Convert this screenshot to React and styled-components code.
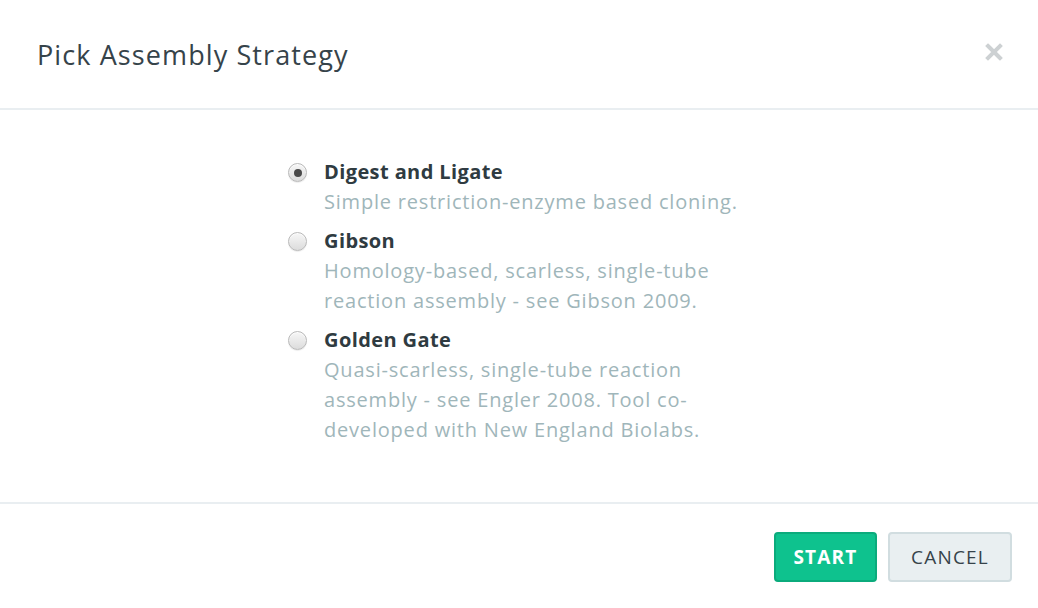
import React, { useState } from "react";
import styled, { createGlobalStyle } from "styled-components";

const GlobalStyle = createGlobalStyle`
    html, body {
        margin: 0;
        padding: 0;
        background: #ffffff;
    }
    body {
        font-family: 'Open Sans', sans-serif;
        -webkit-font-smoothing: antialiased;
    }
`

const Modal = styled.div`
    width: 1038px;
    height: 608px;
    display: flex;
    flex-direction: column;
    background: #ffffff;
`

const Header = styled.header`
    height: 108px;
    padding: 0 35px 0 37px;
    display: flex;
    align-items: center;
    justify-content: space-between;
    border-bottom: 2px solid #e9eef1;
`

const Title = styled.h2`
    margin: 0;
    font-family: 'Open Sans', sans-serif;
    font-weight: 400;
    font-size: 27px;
    color: #36434a;
    letter-spacing: 1.1px;
`

const Close = styled.button`
    border: none;
    background: none;
    padding: 0;
    width: 18px;
    height: 18px;
    cursor: pointer;
    margin-bottom: 4px;
`

const Body = styled.main`
    flex: 1;
    padding-top: 47px;
    border-bottom: 2px solid #e9eef1;
`

const Options = styled.div`
    width: 462px;
    margin: 0 auto;
    display: flex;
    flex-direction: column;
    gap: 9px;
`

const Option = styled.label`
    display: grid;
    grid-template-columns: 36px 1fr;
    cursor: pointer;
`

const Radio = styled.span`
    width: 19px;
    height: 19px;
    margin-top: 6px;
    border-radius: 50%;
    box-sizing: border-box;
    border: 1px solid #b9b9b9;
    background: linear-gradient(#f7f7f7, #dcdcdc);
    box-shadow: inset 0 1px 0 rgba(255,255,255,0.8), 0 1px 1px rgba(0,0,0,0.08);
    display: flex;
    align-items: center;
    justify-content: center;

    &::after {
        content: '';
        width: 8px;
        height: 8px;
        border-radius: 50%;
        background: #4a4a4a;
        display: ${p => (p.$checked ? 'block' : 'none')};
    }
`

const OptionName = styled.div`
    font-family: 'Open Sans', sans-serif;
    font-weight: 700;
    font-size: 20px;
    line-height: 30px;
    letter-spacing: 0.4px;
    color: #2f3b41;
`

const OptionDesc = styled.div`
    font-family: 'Open Sans', sans-serif;
    font-weight: 400;
    font-size: 20px;
    line-height: 30px;
    letter-spacing: 0.8px;
    color: #9fb6ba;
    max-width: 422px;
`

const Footer = styled.footer`
    height: 104px;
    box-sizing: border-box;
    padding: 28px 26px 0 0;
    display: flex;
    justify-content: flex-end;
    gap: 11px;
`

const Button = styled.button`
    height: 50px;
    width: ${p => (p.$primary ? '103px' : '124px')};
    padding: 0;
    box-sizing: border-box;
    border-radius: 4px;
    border: 2px solid ${p => (p.$primary ? '#0bab7c' : '#d1dde0')};
    background: ${p => (p.$primary ? '#0ec28e' : '#e9eff1')};
    color: ${p => (p.$primary ? '#ffffff' : '#36434a')};
    font-family: 'Open Sans', sans-serif;
    font-weight: ${p => (p.$primary ? 700 : 400)};
    font-size: 19px;
    letter-spacing: 1.2px;
    cursor: pointer;
`

const strategies = [
    {
        id: 'digest',
        name: 'Digest and Ligate',
        desc: 'Simple restriction-enzyme based cloning.',
    },
    {
        id: 'gibson',
        name: 'Gibson',
        desc: 'Homology-based, scarless, single-tube reaction assembly - see Gibson 2009.',
    },
    {
        id: 'golden',
        name: 'Golden Gate',
        desc: 'Quasi-scarless, single-tube reaction assembly - see Engler 2008. Tool co-developed with New England Biolabs.',
    },
]

const App = () => {
    const [picked, setPicked] = useState('digest')

    return (
        <Modal>
            <GlobalStyle />
            <Header>
                <Title>Pick Assembly Strategy</Title>
                <Close aria-label="Close">
                    <svg width="18" height="18" viewBox="0 0 18 18">
                        <path d="M3 3 L15 15 M15 3 L3 15" stroke="#cdd1d3" strokeWidth="4" strokeLinecap="square" />
                    </svg>
                </Close>
            </Header>
            <Body>
                <Options>
                    {strategies.map(s => (
                        <Option key={s.id} onClick={() => setPicked(s.id)}>
                            <Radio $checked={picked === s.id} />
                            <div>
                                <OptionName>{s.name}</OptionName>
                                <OptionDesc>{s.desc}</OptionDesc>
                            </div>
                        </Option>
                    ))}
                </Options>
            </Body>
            <Footer>
                <Button $primary>START</Button>
                <Button>CANCEL</Button>
            </Footer>
        </Modal>
    )
}

export default App;
